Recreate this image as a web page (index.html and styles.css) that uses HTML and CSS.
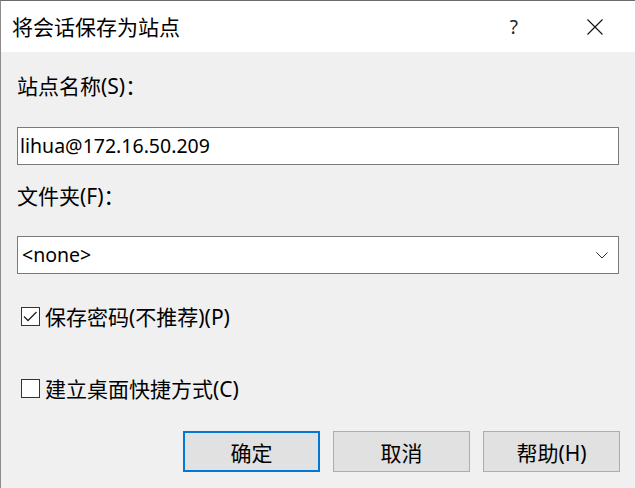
FILE: index.html
```html
<!DOCTYPE html>
<html lang="zh-CN">
<head>
    <meta charset="UTF-8">
    <title>将会话保存为站点</title>
    <link rel="stylesheet" href="styles.css">
</head>
<body>

<div class="dialog">
    <!-- Title bar -->
    <div class="titlebar">
        <span class="title">将会话保存为站点</span>
        <span class="help">?</span>
        <svg class="close" width="16" height="16" viewBox="0 0 16 16">
            <path d="M0.5 0.5 L15.5 15.5 M15.5 0.5 L0.5 15.5" stroke="#111" stroke-width="1.1" fill="none"/>
        </svg>
    </div>

    <div class="content">
        <label class="label first">站点名称(S)：</label>
        <div class="textbox">lihua@172.16.50.209</div>

        <label class="label second">文件夹(F)：</label>
        <div class="combo">
            <span>&lt;none&gt;</span>
            <svg class="chevron" width="12" height="7" viewBox="0 0 12 7">
                <path d="M0.5 0.5 L6 6 L11.5 0.5" stroke="#333" stroke-width="1" fill="none"/>
            </svg>
        </div>

        <div class="check-row first-check">
            <span class="box">
                <svg width="17" height="17" viewBox="0 0 17 17">
                    <path d="M2 8.5 L6 12.5 L14.5 4" stroke="#222" stroke-width="1.3" fill="none"/>
                </svg>
            </span>
            <span>保存密码(不推荐)(P)</span>
        </div>

        <div class="check-row second-check">
            <span class="box"></span>
            <span>建立桌面快捷方式(C)</span>
        </div>

        <div class="buttons">
            <button class="btn default">确定</button>
            <button class="btn">取消</button>
            <button class="btn">帮助(H)</button>
        </div>
    </div>
</div>

</body>
</html>
```

FILE: styles.css
```css
body {
    margin: 0;
    padding: 0;
    background-color: #f0f0f0;
    font-family: "Noto Sans", "Noto Sans CJK SC", sans-serif;
    color: #000;
}
.dialog {
    width: 635px;
    height: 488px;
    box-sizing: border-box;
    border-top: 1px solid #6b6b6b;
    border-left: 1px solid #8c8c8c;
    background-color: #f0f0f0;
    overflow: hidden;
}
.titlebar {
    height: 51px;
    background-color: #fff;
    display: flex;
    align-items: center;
    padding-left: 11px;
}
.title {
    font-size: 21px;
    line-height: 28px;
    flex: 1;
}
.help {
    font-size: 19px;
    line-height: 28px;
    color: #222;
    margin-right: 69px;
}
.close {
    margin-right: 32px;
}
.content {
    padding: 0 16px 0 16px;
    display: flex;
    flex-direction: column;
}
.label {
    font-size: 21px;
    line-height: 28px;
    height: 28px;
}
.label.first {
    margin-top: 20px;
}
.label.second {
    margin-top: 17px;
}
.textbox, .combo {
    box-sizing: border-box;
    height: 38px;
    background-color: #fff;
    border: 1px solid #7a7a7a;
    font-size: 19.5px;
    line-height: 36px;
}
.textbox {
    margin-top: 27px;
    padding-left: 2px;
}
.combo {
    margin-top: 26px;
    padding: 0 10px 0 4px;
    display: flex;
    align-items: center;
    justify-content: space-between;
}
.check-row {
    display: flex;
    align-items: center;
    height: 28px;
    font-size: 21px;
    padding-left: 4px;
}
.first-check {
    margin-top: 28px;
}
.second-check {
    margin-top: 44px;
}
.box {
    width: 19px;
    height: 19px;
    box-sizing: border-box;
    border: 1px solid #333;
    background-color: #fff;
    margin-right: 5px;
    display: flex;
    align-items: center;
    justify-content: center;
}
.buttons {
    display: flex;
    justify-content: flex-end;
    gap: 13px;
    margin-top: 29px;
    margin-right: -1px;
}
.btn {
    width: 137px;
    height: 41px;
    box-sizing: border-box;
    background-color: #e1e1e1;
    border: 1px solid #adadad;
    font-family: "Noto Sans", "Noto Sans CJK SC", sans-serif;
    font-size: 21px;
    color: #000;
    padding: 0;
}
.btn.default {
    border: 2px solid #0078d7;
}
```
